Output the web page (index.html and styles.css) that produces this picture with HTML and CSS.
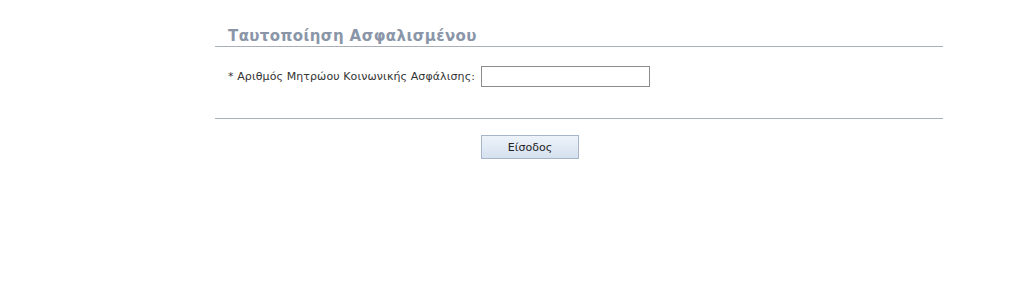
FILE: index.html
```html
<!DOCTYPE html>
<html lang="el">
<head>
    <meta charset="UTF-8">
    <title>Ταυτοποίηση Ασφαλισμένου</title>
    <link rel="stylesheet" href="styles.css">
</head>
<body>
    <div class="login-box">
        <h2 class="box-title">Ταυτοποίηση Ασφαλισμένου</h2>
        <div class="form-row">
            <label class="field-label" for="amka">* Αριθμός Μητρώου Κοινωνικής Ασφάλισης:</label>
            <input class="field-input" type="text" id="amka">
        </div>
        <div class="actions">
            <button class="btn">Είσοδος</button>
        </div>
    </div>
</body>
</html>
```
FILE: styles.css
```css
body {
    margin: 0;
    padding: 0;
    background: #ffffff;
    font-family: Verdana, "DejaVu Sans", sans-serif;
}

.login-box {
    width: 728px;
    margin-left: 215px;
    padding-top: 27px;
}

.box-title {
    margin: 0;
    padding-left: 13px;
    font-size: 15px;
    font-weight: bold;
    letter-spacing: 0.4px;
    color: #8a96a8;
    line-height: 19px;
    border-bottom: 1px solid #a9b0b8;
}

.form-row {
    display: flex;
    align-items: center;
    padding: 18px 0 0 13px;
    height: 22px;
    border-bottom: 1px solid #a9b0b8;
    padding-bottom: 31px;
}

.field-label {
    font-size: 11px;
    letter-spacing: 0.1px;
    color: #333333;
    margin-right: 6px;
}

.field-input {
    width: 167px;
    height: 19px;
    padding: 0;
    border: 1px solid #8c8c8c;
    margin: 0;
}

.actions {
    padding: 16px 0 0 266px;
}

.btn {
    width: 98px;
    height: 24px;
    font-family: Verdana, "DejaVu Sans", sans-serif;
    font-size: 11px;
    color: #222222;
    background: linear-gradient(#eef3fa, #d5e1ef);
    border: 1px solid #a7b5c8;
    cursor: pointer;
}
```
